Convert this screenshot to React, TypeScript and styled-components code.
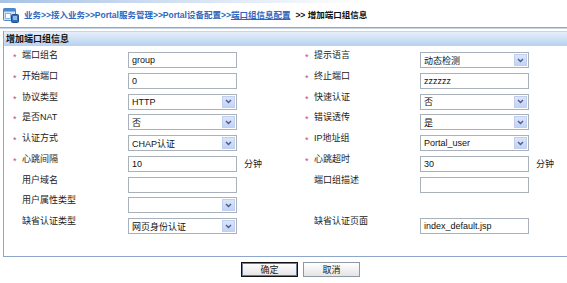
import * as React from "react";
import styled, { createGlobalStyle } from "styled-components";

const GlobalStyle = createGlobalStyle`
  html, body {
    margin: 0;
    padding: 0;
    background: #fff;
    overflow: hidden;
  }
  body {
    font-family: "Liberation Sans", "Noto Sans CJK SC", sans-serif;
    font-size: 9px;
    color: #222;
  }
`;

const Page = styled.div`
  width: 600px;
`;

const TopStrip = styled.div`
  height: 3px;
  background: linear-gradient(to right, #a8c2e6, #dbe6f5 35%, #ffffff 60%);
`;

const Crumbs = styled.div`
  display: flex;
  align-items: center;
  height: 22px;
  padding: 0 0 2px 3px;
  border-bottom: 1px solid #8ea6ca;
  box-shadow: 0 1px 0 #c8d5e9;
  font-size: 8.5px;
  font-weight: bold;
  white-space: nowrap;
`;

const CrumbIcon = styled.svg`
  width: 16px;
  height: 17px;
  margin-right: 5px;
  flex: none;
`;

const CrumbLink = styled.span<{ $underline?: boolean }>`
  color: #2f66bd;
  text-decoration: ${(p) => (p.$underline ? "underline" : "none")};
`;

const CrumbCurrent = styled.span`
  color: #111;
  margin-left: 5px;
`;

const Panel = styled.div`
  margin: 3px 0 0 3px;
  width: 593px;
  border: 1px solid #8ea6c9;
  border-top: none;
`;

const PanelHeader = styled.div`
  height: 15px;
  line-height: 15px;
  padding-left: 2px;
  font-weight: bold;
  color: #111;
  background: linear-gradient(#e6effa, #b6d1f0);
  border-top: 1px solid #c4d6ee;
  box-sizing: border-box;
`;

const PanelBody = styled.div`
  padding: 4px 0 19px;
`;

const Row = styled.div`
  display: grid;
  grid-template-columns: 292px 292px;
  height: 20.75px;
`;

const Field = styled.div`
  display: grid;
  grid-template-columns: 9px 106px 109px auto;
  align-items: start;
  padding-left: 9px;
`;

const Star = styled.span`
  color: #b34f8e;
  line-height: 10px;
  padding-top: 2px;
`;

const Label = styled.span`
  line-height: 10px;
  color: #222;
`;

const TextBox = styled.input`
  box-sizing: border-box;
  width: 109px;
  height: 16px;
  margin: 2px 0 0;
  padding: 0 3px;
  border: 1px solid #a9b1bb;
  font: inherit;
  color: #111;
  background: #fff;
  outline: none;
`;

const SelectBox = styled.div`
  box-sizing: border-box;
  display: flex;
  align-items: center;
  justify-content: space-between;
  width: 109px;
  height: 16px;
  margin-top: 2px;
  padding: 0 1px 0 3px;
  border: 1px solid #a9b1bb;
  background: #fff;
  color: #111;
`;

const Arrow = styled.span`
  box-sizing: border-box;
  display: flex;
  align-items: center;
  justify-content: center;
  width: 13px;
  height: 12px;
  background: linear-gradient(#dbe5fb, #c3d3f6);
  border: 1px solid #c0cff0;
`;

const Unit = styled.span`
  margin: 2px 0 0 7px;
  line-height: 16px;
`;

const Buttons = styled.div`
  display: flex;
  justify-content: center;
  gap: 5px;
  width: 595px;
  margin: 5px 0 0 3px;
`;

const Button = styled.button<{ $primary?: boolean }>`
  box-sizing: border-box;
  width: 57px;
  height: 15px;
  padding: 0;
  font: inherit;
  color: #222;
  background: linear-gradient(#ffffff, #e4e4e4);
  border: 1px solid ${(p) => (p.$primary ? "#111" : "#8e97a4")};
  box-shadow: ${(p) => (p.$primary ? "inset 0 0 0 1px #6d7d9c" : "none")};
`;

type Item = {
  label: string;
  required?: boolean;
  value?: string;
  select?: boolean;
  unit?: string;
};

const rows: [Item, Item | null][] = [
  [
    { label: "端口组名", required: true, value: "group" },
    { label: "提示语言", required: true, value: "动态检测", select: true },
  ],
  [
    { label: "开始端口", required: true, value: "0" },
    { label: "终止端口", required: true, value: "zzzzzz" },
  ],
  [
    { label: "协议类型", required: true, value: "HTTP", select: true },
    { label: "快速认证", required: true, value: "否", select: true },
  ],
  [
    { label: "是否NAT", required: true, value: "否", select: true },
    { label: "错误透传", required: true, value: "是", select: true },
  ],
  [
    { label: "认证方式", required: true, value: "CHAP认证", select: true },
    { label: "IP地址组", required: true, value: "Portal_user", select: true },
  ],
  [
    { label: "心跳间隔", required: true, value: "10", unit: "分钟" },
    { label: "心跳超时", required: true, value: "30", unit: "分钟" },
  ],
  [
    { label: "用户域名", value: "" },
    { label: "端口组描述", value: "" },
  ],
  [{ label: "用户属性类型", value: "", select: true }, null],
  [
    { label: "缺省认证类型", value: "网页身份认证", select: true },
    { label: "缺省认证页面", value: "index_default.jsp" },
  ],
];

const Chevron = () => (
  <svg width="7" height="5" viewBox="0 0 7 5">
    <path d="M1 1 L3.5 3.5 L6 1" fill="none" stroke="#4b5d86" strokeWidth="1.4" />
  </svg>
);

const FormField = ({ item }: { item: Item | null }) => {
  if (!item) return <Field />;
  return (
    <Field>
      <Star>{item.required ? "*" : ""}</Star>
      <Label>{item.label}</Label>
      {item.select ? (
        <SelectBox>
          <span>{item.value}</span>
          <Arrow>
            <Chevron />
          </Arrow>
        </SelectBox>
      ) : (
        <TextBox readOnly defaultValue={item.value} />
      )}
      {item.unit && <Unit>{item.unit}</Unit>}
    </Field>
  );
};

const App = () => {
  return (
    <Page>
      <GlobalStyle />
      <TopStrip />
      <Crumbs>
        <CrumbIcon viewBox="0 0 16 17">
          <rect x="0.5" y="2.5" width="12" height="12" rx="1" fill="#cfe3f8" stroke="#4d86c9" />
          <rect x="0.5" y="2.5" width="12" height="3" fill="#4d86c9" />
          <rect x="2.5" y="7.5" width="5" height="5" fill="#fff" stroke="#8db4e0" />
          <rect x="8.5" y="8.5" width="7" height="8" rx="1" fill="#2f6fc2" stroke="#1f4f91" />
          <rect x="10" y="10.5" width="4" height="1" fill="#fff" />
          <rect x="10" y="12.5" width="4" height="1" fill="#fff" />
        </CrumbIcon>
        <CrumbLink>业务&gt;&gt;接入业务&gt;&gt;Portal服务管理&gt;&gt;Portal设备配置&gt;&gt;</CrumbLink>
        <CrumbLink $underline>端口组信息配置</CrumbLink>
        <CrumbCurrent>&gt;&gt; 增加端口组信息</CrumbCurrent>
      </Crumbs>
      <Panel>
        <PanelHeader>增加端口组信息</PanelHeader>
        <PanelBody>
          {rows.map(([left, right], i) => (
            <Row key={i}>
              <FormField item={left} />
              <FormField item={right} />
            </Row>
          ))}
        </PanelBody>
      </Panel>
      <Buttons>
        <Button $primary>确定</Button>
        <Button>取消</Button>
      </Buttons>
    </Page>
  );
};

export default App;
